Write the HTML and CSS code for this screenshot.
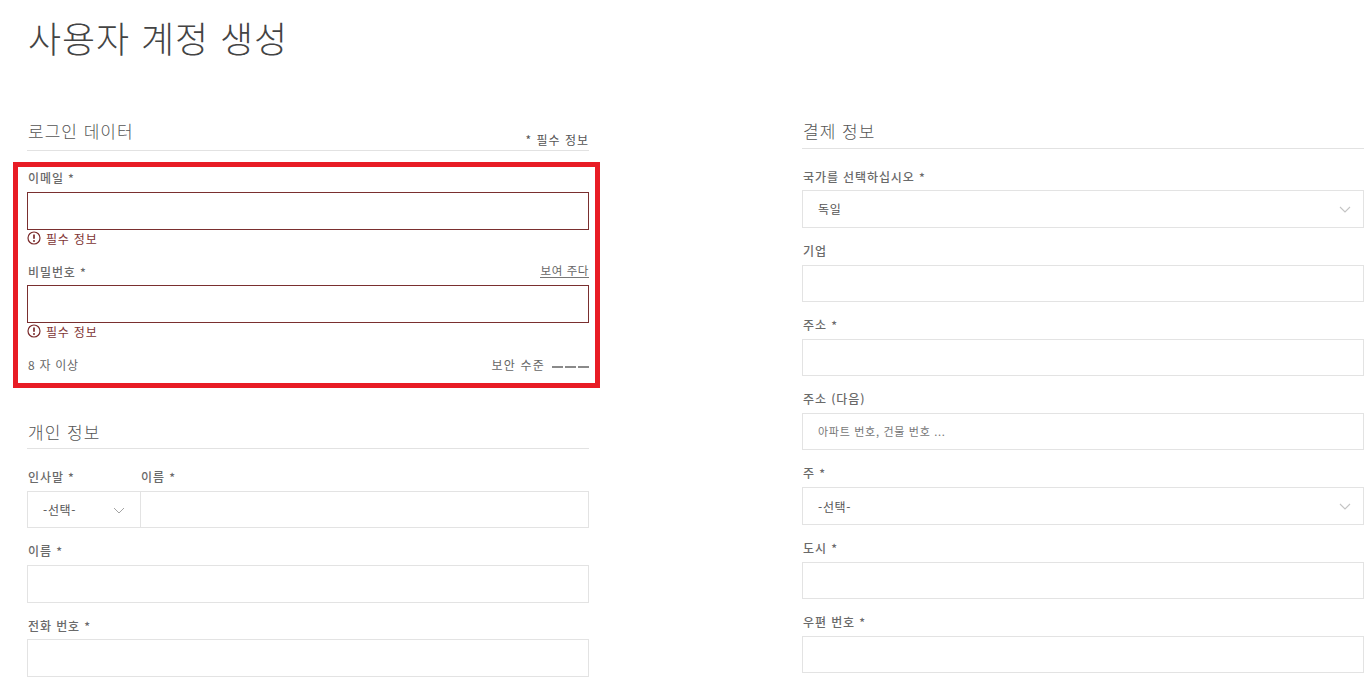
FILE: index.html
```html
<!DOCTYPE html>
<html lang="ko">
<head>
<meta charset="utf-8">
<title>사용자 계정 생성</title>
<link rel="stylesheet" href="styles.css">
</head>
<body>
<main class="page">
  <h1 class="title">사용자 계정 생성</h1>
  <div class="columns">
    <section class="col col-left">
      <div class="heading heading-login">
        <h2>로그인 데이터</h2>
        <span class="required-note">* 필수 정보</span>
      </div>
      <div class="login-group">
        <div class="annot" aria-hidden="true"></div>
        <label class="label label-first">이메일 *</label>
        <input class="input input-error" type="text">
        <div class="error">
          <svg class="err-icon" viewBox="0 0 14 14"><circle cx="7" cy="7" r="6" fill="none" stroke="#7a2a2a" stroke-width="1.2"/><path d="M7 3.4v4.4" stroke="#7a2a2a" stroke-width="1.7"/><circle cx="7" cy="10" r="1" fill="#7a2a2a"/></svg>
          <span>필수 정보</span>
        </div>
        <div class="label-row">
          <label class="label">비밀번호 *</label>
          <a class="show-link">보여 주다</a>
        </div>
        <input class="input input-error" type="password">
        <div class="error">
          <svg class="err-icon" viewBox="0 0 14 14"><circle cx="7" cy="7" r="6" fill="none" stroke="#7a2a2a" stroke-width="1.2"/><path d="M7 3.4v4.4" stroke="#7a2a2a" stroke-width="1.7"/><circle cx="7" cy="10" r="1" fill="#7a2a2a"/></svg>
          <span>필수 정보</span>
        </div>
        <div class="hint-row">
          <span>8 자 이상</span>
          <span class="strength">보안 수준 <span class="bars"><i></i><i></i><i></i></span></span>
        </div>
      </div>
      <div class="heading heading-personal"><h2>개인 정보</h2></div>
      <div class="name-row">
        <div class="salutation">
          <label class="label">인사말 *</label>
          <div class="select-wrap">
            <select class="input select"><option>-선택-</option></select>
            <svg class="chev chev-thin" viewBox="0 0 12 7"><path d="M1 1l5 5 5-5" fill="none" stroke="#999" stroke-width=".9"/></svg>
          </div>
        </div>
        <div class="firstname">
          <label class="label">이름 *</label>
          <input class="input" type="text">
        </div>
      </div>
      <div class="field"><label class="label">이름 *</label><input class="input" type="text"></div>
      <div class="field"><label class="label">전화 번호 *</label><input class="input" type="text"></div>
    </section>
    <section class="col col-right">
      <div class="heading heading-billing"><h2>결제 정보</h2></div>
      <div class="field field-first">
        <label class="label">국가를 선택하십시오 *</label>
        <div class="select-wrap">
          <select class="input select"><option>독일</option></select>
          <svg class="chev" viewBox="0 0 12 7"><path d="M1 1l5 5 5-5" fill="none" stroke="#c4c4c4" stroke-width="1.1"/></svg>
        </div>
      </div>
      <div class="field"><label class="label">기업</label><input class="input" type="text"></div>
      <div class="field"><label class="label">주소 *</label><input class="input" type="text"></div>
      <div class="field"><label class="label">주소 (다음)</label><input class="input input-hint" type="text" placeholder="아파트 번호, 건물 번호 ..."></div>
      <div class="field">
        <label class="label">주 *</label>
        <div class="select-wrap">
          <select class="input select"><option>-선택-</option></select>
          <svg class="chev" viewBox="0 0 12 7"><path d="M1 1l5 5 5-5" fill="none" stroke="#c4c4c4" stroke-width="1.1"/></svg>
        </div>
      </div>
      <div class="field"><label class="label">도시 *</label><input class="input" type="text"></div>
      <div class="field"><label class="label">우편 번호 *</label><input class="input" type="text"></div>
    </section>
  </div>
</main>
</body>
</html>
```
FILE: styles.css
```css
* { box-sizing: border-box; }
html, body { margin: 0; padding: 0; height: 100%; overflow: hidden; background: #fff; }
body {
  font-family: "Noto Sans CJK KR", "Noto Sans", sans-serif;
  color: #555;
  font-size: 12px;
}
.page { padding: 0 2px 0 27px; }
.title {
  margin: 0;
  height: 118px;
  padding: 11px 0 0 1px;
  font-size: 36px;
  line-height: 52px;
  font-weight: 300;
  letter-spacing: .9px;
  color: #444;
}
.columns { display: grid; grid-template-columns: 562px 562px; column-gap: 213px; }
.heading {
  display: flex;
  justify-content: space-between;
  align-items: flex-start;
  border-bottom: 1px solid #e2e2e2;
}
.heading h2 {
  margin: 0;
  padding-left: 1px;
  font-size: 17px;
  line-height: 26px;
  font-weight: 300;
  letter-spacing: 1px;
  color: #555;
}
.heading-login { height: 33px; }
.heading-billing { height: 31px; }
.heading-personal { height: 30px; margin-top: 45px; }
.required-note {
  font-size: 12px;
  line-height: 18px;
  letter-spacing: 1px;
  margin-top: 13px;
  color: #555;
}
.login-group { position: relative; padding-top: 17px; }
.annot {
  position: absolute;
  left: -14px;
  right: -11px;
  top: 11px;
  height: 226px;
  border: 5px solid #e81c25;
  pointer-events: none;
}
.label {
  display: block;
  height: 37px;
  padding: 13px 0 0 1px;
  line-height: 19px;
  font-size: 12px;
  font-weight: 500;
  letter-spacing: .9px;
  color: #6a6a6a;
}
.label-first { height: 24px; padding-top: 0; }
.label-row { display: flex; justify-content: space-between; align-items: flex-start; height: 23px; margin-top: 14px; }
.label-row .label { height: auto; padding-top: 0; }
.show-link {
  font-size: 11.5px;
  line-height: 14px;
  letter-spacing: .6px;
  color: #666;
  border-bottom: 1px solid #777;
  margin-top: 1px;
}
.input {
  display: block;
  width: 100%;
  height: 37.33px;
  margin: 0;
  padding: 0 15px;
  border: 1px solid #e3e3e3;
  border-radius: 0;
  background: #fff;
  font: inherit;
  color: #555;
  letter-spacing: .7px;
  outline: none;
}
.input-hint { padding-bottom: 2px; }
.input::placeholder { color: #777; opacity: 1; font-size: 11px; }
.input-error { height: 38px; border-color: #7a2f2f; }
.error {
  display: flex;
  align-items: center;
  gap: 5px;
  height: 18px;
  color: #803535;
  letter-spacing: .8px;
  line-height: 18px;
}
.err-icon { width: 14px; height: 14px; flex: none; margin-top: -2px; }
.hint-row {
  display: flex;
  justify-content: space-between;
  align-items: flex-start;
  height: 18px;
  margin-top: 15px;
  padding-left: 1px;
  letter-spacing: .7px;
  line-height: 17px;
  color: #666;
}
.strength { display: flex; align-items: center; gap: 7px; letter-spacing: 1.2px; }
.bars { display: flex; gap: 2px; margin-top: 4px; }
.bars i { display: block; width: 11px; height: 2px; background: #8a8a8a; }
.name-row { display: flex; margin-top: 5px; }
.name-row .input { height: 37px; }
.col-left .field .input { height: 38px; }
.col-left .field + .field .label { height: 36px; }
.salutation { width: 113px; flex: none; }
.salutation .input { border-right: 0; }
.firstname { flex: 1; min-width: 0; }
.field-first { margin-top: 4.18px; }
.field-first .label { padding-top: 14px; }
.select-wrap { position: relative; }
.select { appearance: none; -webkit-appearance: none; }
.chev {
  position: absolute;
  right: 13px;
  top: 16px;
  width: 12px;
  height: 7px;
}
.chev-thin { right: 15px; }
```
